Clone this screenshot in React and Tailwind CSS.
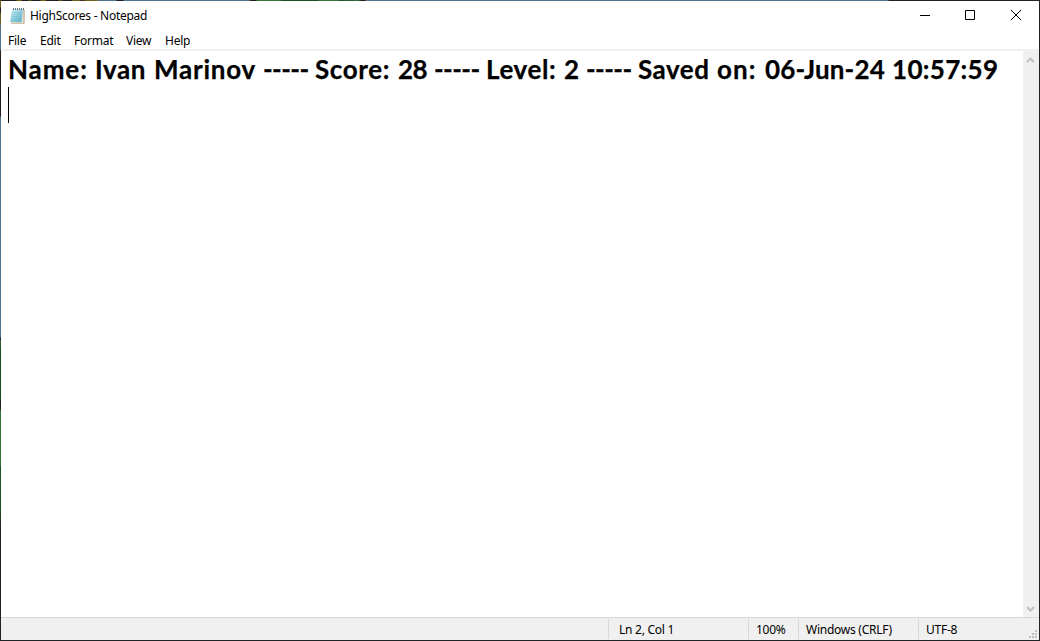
const words = [
  ['Name:', 'w-[87px]', 'tracking-[0.9px]'],
  ['Ivan', 'w-[59px]', 'tracking-[0.6px]'],
  ['Marinov', 'w-[109px]', 'tracking-[0.75px]'],
  ['-----', 'w-[52px]', 'tracking-[-0.6px]'],
  ['Score:', 'w-[83px]', 'tracking-[0.6px]'],
  ['28', 'w-[36px]', 'tracking-[-0.5px]'],
  ['-----', 'w-[52px]', 'tracking-[-0.6px]'],
  ['Level:', 'w-[78px]', 'tracking-[0.6px]'],
  ['2', 'w-[22px]', 'tracking-[0px]'],
  ['-----', 'w-[52px]', 'tracking-[-0.6px]'],
  ['Saved', 'w-[79px]', 'tracking-[0.5px]'],
  ['on:', 'w-[48px]', 'tracking-[1.1px]'],
  ['06-Jun-24', 'w-[127px]', 'tracking-[0.15px]'],
  ['10:57:59', 'w-[108px]', 'tracking-[0.3px]'],
];

function NotepadIcon() {
  return (
    <svg width="16" height="18" viewBox="0 0 16 18" className="ml-[8px] shrink-0">
      <defs>
        <linearGradient id="page" x1="0" y1="0" x2="1" y2="1">
          <stop offset="0" stopColor="#d5f2f7" />
          <stop offset="1" stopColor="#55afc5" />
        </linearGradient>
      </defs>
      <path d="M4 3H15.5V16.5H2Z" fill="#a08c6c" />
      <path d="M3.5 2.500H14.6V15.7H2Z" fill="#f0e8d8" />
      <path d="M3 2.500H14L12.5 15H1Z" fill="url(#page)" />
      <path d="M3 5.500H13M3 7.500H13M2.500 9.500H13M2.500 11.500H12.500M2 13.500H12.500" stroke="#6db9cc" strokeWidth=".5" />
      <path d="M4.500 1V3M6.500 1V3M8.500 1V3M10.500 1V3M12.500 1V3M14.500 1V3" stroke="#4b6972" strokeWidth=".9" />
    </svg>
  );
}

export default function App() {
  return (
    <div className="grid h-[641px] w-[1040px] grid-cols-[1px_1038px_1px] grid-rows-[1px_639px_1px] overflow-hidden bg-[#202226] font-['Noto_Sans','Open_Sans',sans-serif] text-[12px] text-black">
      <div className="col-span-3 bg-[linear-gradient(to_right,#62521c_0px,#211e20_2px,#211e20_16px,#75601a_17px,#75601a_21px,#211e20_22px,#211e20_28px,#75601a_29px,#211e20_33px,#211e20_40px,#75601a_41px,#75601a_45px,#211e20_47px,#211e20_58px,#75601a_60px,#211e20_64px,#211e20_71px,#75601a_73px,#75601a_80px,#211e20_81px,#75601a_87px,#75601a_97px,#52718a_98px,#52718a_116px,#211e20_117px,#211e20_123px,#52718a_124px,#52718a_249px,#211e20_251px,#211e20_256px,#377338_257px,#377338_280px,#1e4924_282px,#1e4924_318px,#377338_319px,#377338_338px,#1e5228_340px,#377338_358px,#211e20_361px,#211e20_365px,#52718a_366px,#52718a_888px,#202226_889px)]" />
      <div className="bg-[linear-gradient(to_bottom,#75601a_0px,#75601a_6px,#211e20_7px,#211e20_11px,#75601a_13px,#75601a_22px,#52718a_24px,#52718a_49px,#211e20_50px,#211e20_115px,#52718a_116px,#52718a_336px,#1c1e20_337px,#2f652e_341px,#1e4924_348px,#1e4924_398px,#211e20_400px,#211e20_408px,#377338_410px,#377338_464px,#1e5228_466px,#1e4924_513px,#202226_525px)]" />
      <div className="flex flex-col bg-white">
        <header className="flex h-[29px] items-center">
          <NotepadIcon />
          <h1 className="ml-[5px] flex-1 tracking-[-0.28px]">HighScores - Notepad</h1>
          <svg width="120" height="29" viewBox="0 0 120 29" fill="none" stroke="#000" className="mr-[1px]">
            <path d="M2 14.500H12" />
            <path d="M47.500 9.500H56.500V18.500H47.500Z" />
            <path d="M93 9L103 19M103 9L93 19" />
          </svg>
        </header>
        <nav className="flex h-[19px] items-start pl-[7px] leading-[21px] tracking-[-0.25px]">
          <span className="w-[32px]">File</span>
          <span className="w-[34px]">Edit</span>
          <span className="w-[52px]">Format</span>
          <span className="w-[39px]">View</span>
          <span>Help</span>
        </nav>
        <div className="h-[2px] bg-[#f0f0f0]" />
        <main className="flex h-[566px]">
          <div className="flex-1 pl-[7px]">
            <div className="flex h-[36px] items-center whitespace-nowrap font-['Lato',sans-serif] text-[26px] leading-[36px] font-bold [-webkit-text-stroke:0.25px_black]">
              {words.map(([text, width, tracking], i) => (
                <span key={i} className={`${width} ${tracking} shrink-0`}>{text}</span>
              ))}
            </div>
            <div className="h-[36px] w-px bg-black" />
          </div>
          <div className="flex w-[16px] flex-col items-center justify-between bg-[#f0f0f0]">
            <svg width="16" height="17" viewBox="0 0 16 17" fill="none" stroke="#bfbfbf" strokeWidth="2"><path d="M4 11L7.500 7.500L11 11" /></svg>
            <svg width="16" height="17" viewBox="0 0 16 17" fill="none" stroke="#bfbfbf" strokeWidth="2"><path d="M4 7L7.500 10.500L11 7" /></svg>
          </div>
        </main>
        <footer className="flex h-[23px] border-t border-[#d7d7d7] bg-[#f0f0f0] py-px leading-[22px] tracking-[-0.25px]">
          <div className="w-[607px]" />
          <div className="w-[140px] border-l border-[#d7d7d7] pl-[10px]">Ln 2, Col 1</div>
          <div className="w-[50px] border-l border-[#d7d7d7] pl-[7px]">100%</div>
          <div className="w-[120px] border-l border-[#d7d7d7] pl-[7px]">Windows (CRLF)</div>
          <div className="flex-1 border-l border-[#d7d7d7] pl-[7px]">UTF-8</div>
          <svg width="12" height="20" viewBox="0 0 12 20" fill="#bfbfbf">
            <path d="M8 11h2v2h-2zM5 14h2v2h-2zM8 14h2v2h-2zM2 17h2v2h-2zM5 17h2v2h-2zM8 17h2v2h-2z" />
          </svg>
        </footer>
      </div>
      <div className="bg-[#202226]" />
      <div className="col-span-3 bg-[#202226]" />
    </div>
  );
}
